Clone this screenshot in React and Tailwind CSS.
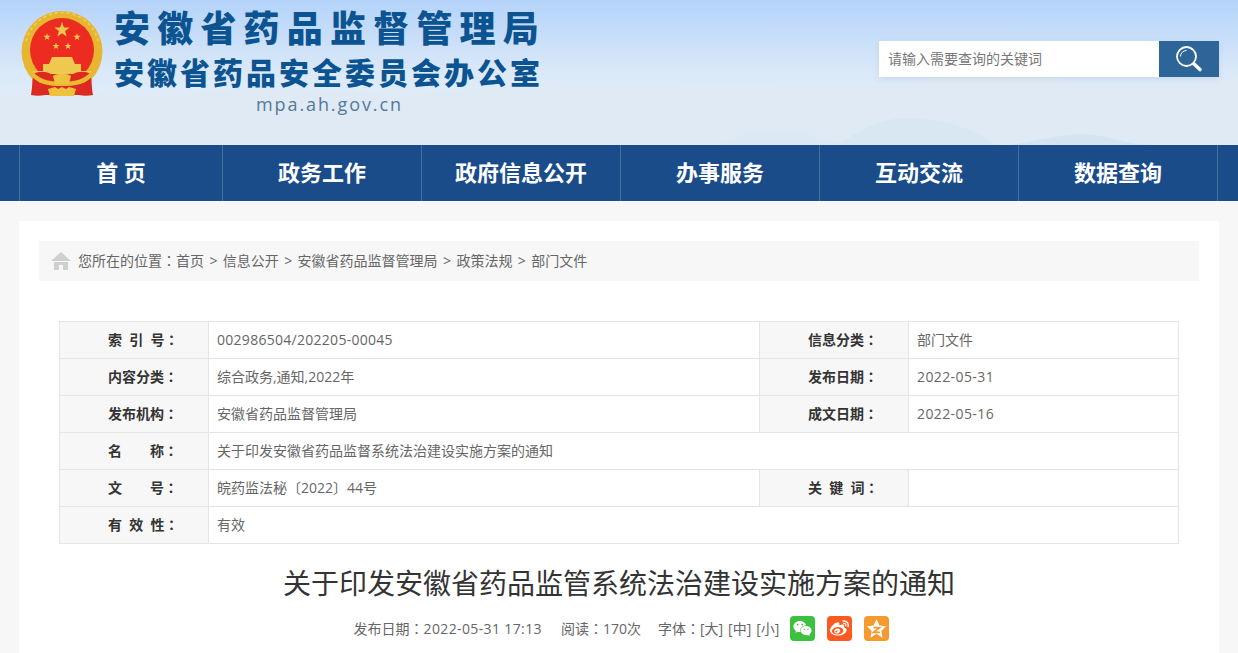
import { FaWeixin, FaWeibo } from "react-icons/fa";

const NAV = ["首 页", "政务工作", "政府信息公开", "办事服务", "互动交流", "数据查询"];
const CRUMBS = ["首页", "信息公开", "安徽省药品监督管理局", "政策法规", "部门文件"];

// centred full-width colon, the SC face puts it low and left
function Colon() {
  return <span className="font-['Noto_Sans_CJK_TC']">：</span>;
}

function Label({ children }) {
  return (
    <td className="border border-[#e5e5e5] bg-[#f7f7f7] pb-[2px] pl-[48px] font-bold text-[#333] whitespace-pre">
      {children}
      <Colon />
    </td>
  );
}

function Value({ children, span }) {
  return (
    <td colSpan={span} className="border border-[#e5e5e5] pb-[2px] pl-[8px] text-[#666]">
      {children}
    </td>
  );
}

function Emblem() {
  const star = "M0-10 2.4-3.1 9.5-3.1 3.8 1.2 5.9 8.1 0 4 -5.9 8.1 -3.8 1.2 -9.5-3.1 -2.4-3.1Z";
  return (
    <svg width="82" height="86" viewBox="0 0 82 86" className="shrink-0">
      <path d="M11 60 C12 70 11 78 10 84 C16 85 22 85 28 83 L34 76 L48 76 L54 83 C60 85 66 85 72 84 C71 78 70 70 71 60Z" fill="#d9271f" />
      <circle cx="41" cy="40.5" r="40.5" fill="#e7b630" />
      <path d="M5 30 A37 37 0 0 1 77 30" fill="none" stroke="#f1cf63" strokeWidth="1.5" strokeDasharray="3 3" />
      <circle cx="41" cy="39" r="32" fill="#ec2c20" />
      <g fill="#efc84f">
        <path transform="translate(41 19) scale(.8)" d={star} />
        <path transform="translate(26 26) scale(.38)" d={star} />
        <path transform="translate(56 26) scale(.38)" d={star} />
        <path transform="translate(35 35) scale(.36)" d={star} />
        <path transform="translate(47 35) scale(.36)" d={star} />
        <path d="M31 46h20l3 7H28z" />
        <path d="M22 53h38v7H22z" />
        <path d="M11 60h60v5H11z" />
      </g>
      <path d="M12 63 C18 60 24 60 30 63 L52 63 C58 60 64 60 70 63 L70 84 L54 84 L27 84 L12 84Z" fill="#dc2a20" />
      <path d="M9 57 C16 68 28 71 41 71 C54 71 66 68 73 57 L74 62 C66 74 54 75 41 75 C28 75 16 74 8 62Z" fill="#e9b92f" />
      <path d="M32 65c4-3 14-3 18 0l-2 8H34z" fill="#efc23d" />
      <path d="M27 78l7-2 3 2 4-2 4 2 3-2 7 2-2 7H29z" fill="#efc23d" />
    </svg>
  );
}

function SearchIcon() {
  return (
    <svg width="28" height="28" viewBox="0 0 28 28" fill="none">
      <circle cx="11.5" cy="11.5" r="9.5" stroke="#fff" strokeWidth="1.8" />
      <path d="M5.5 11.5a6 6 0 0 1 6-6" stroke="#fff" strokeWidth="1" />
      <path d="M19 19l6 5.5" stroke="#fff" strokeWidth="3.6" strokeLinecap="round" />
    </svg>
  );
}

function HomeIcon() {
  return (
    <svg width="20" height="18" viewBox="0 0 20 18" className="mr-[7px] shrink-0" fill="#cfcfcf">
      <path d="M10 0 20 9H0Z" />
      <path d="M3 10h14v8h-5v-5H8v5H3Z" />
    </svg>
  );
}

function QzoneIcon() {
  return (
    <svg width="21" height="21" viewBox="0 0 24 24">
      <path fill="#fff" d="M12 1.5l3.4 7 7.6 1-5.5 5.3 1.4 7.7L12 18l-6.9 4.5 1.4-7.7L1 9.5l7.6-1z" />
      <path fill="none" stroke="#f59a2e" strokeWidth="2" d="M8.5 11h7l-7 5.5h7.5" />
    </svg>
  );
}

export default function App() {
  return (
    <div className="h-screen overflow-hidden bg-[#f7f7f7] font-['Open_Sans','Noto_Sans_CJK_SC',sans-serif] text-[14px]">
      <header className="relative h-[145px] overflow-hidden bg-gradient-to-b from-[#b4d3fa] via-[#dbe9f8] to-[#e9f1f9]">
        {/* mountains behind the title */}
        <svg className="absolute inset-0" width="1238" height="145" viewBox="0 0 1238 145" preserveAspectRatio="none">
          <path fill="#dfeaf4" d="M0 95 C60 88 130 98 220 92 C300 84 380 100 470 90 C540 76 600 84 680 88 C760 92 800 84 880 86 C920 82 980 66 1040 76 C1100 88 1180 84 1238 78 L1238 145 L0 145Z" />
          <path fill="#d9e7f2" d="M840 145 C850 135 880 118 905 118 C940 118 975 128 995 145Z" />
          <path fill="#d5e4f1" d="M1010 145 C1040 140 1060 135 1085 134 C1110 136 1130 145 1150 145Z" />
          <path fill="#dce8f3" d="M720 145 C740 134 770 128 800 134 C820 138 830 142 850 145Z" />
        </svg>
        <div className="relative flex items-start pl-[21px] pr-[19px]">
          <div className="mt-[11px]">
            <Emblem />
          </div>
          <div className="ml-[11px] w-[426px] text-[#0c5391]">
            <div className="mt-[6px] h-[46px] whitespace-nowrap text-[36px] leading-[46px] font-black tracking-[7.2px]">安徽省药品监督管理局</div>
            <div className="h-[41px] whitespace-nowrap text-[30px] leading-[41px] font-black tracking-[3px]">安徽省药品安全委员会办公室</div>
            <div className="ml-[142px] mt-[-1px] whitespace-nowrap text-[18px] leading-[24px] tracking-[1.9px] text-[#54799b]">mpa.ah.gov.cn</div>
          </div>
          <div className="ml-auto mt-[41px] flex h-[36px] w-[340px] shadow-[0_2px_6px_rgba(120,150,190,0.2)]">
            <div className="flex flex-1 items-center bg-white pb-[1px] pl-[9px] text-[14px] text-[#777]">请输入需要查询的关键词</div>
            <button className="flex w-[60px] items-center justify-center bg-[#2e6599]">
              <SearchIcon />
            </button>
          </div>
        </div>
      </header>

      <nav className="h-[56px] bg-[#1a4c8a] pl-[19px]">
        <div className="grid h-full w-[1199px] grid-cols-[202px_repeat(5,199px)] border-x border-[#44709f]">
          {NAV.map((item, i) => (
            <div
              key={item}
              className={`flex items-center justify-center pb-[2px] text-[22px] font-bold whitespace-pre text-white ${i > 0 ? "border-l border-[#44709f]" : ""}`}
            >
              {item}
            </div>
          ))}
        </div>
      </nav>

      <main className="mx-[19px] mt-[20px] bg-white px-[20px] pt-[20px] pb-[40px]">
        <div className="flex h-[40px] items-center bg-[#f7f7f7] pb-[1px] pl-[12px] text-[#666]">
          <HomeIcon />
          您所在的位置<Colon />
          {CRUMBS.map((c, i) => (
            <span key={c} className="whitespace-pre">
              {i > 0 && <span className="mx-[5.4px]">&gt;</span>}
              {c}
            </span>
          ))}
        </div>

        <table className="mx-[20px] mt-[40px] w-[1119px] table-fixed border-collapse [&_tr]:h-[37px]">
          <colgroup>
            <col className="w-[149px]" />
            <col className="w-[551px]" />
            <col className="w-[149px]" />
            <col className="w-[270px]" />
          </colgroup>
          <tbody>
            <tr>
              <Label>{"索  引  号"}</Label>
              <Value><span className="tracking-[0.28px]">002986504/202205-00045</span></Value>
              <Label>信息分类</Label>
              <Value>部门文件</Value>
            </tr>
            <tr>
              <Label>内容分类</Label>
              <Value>综合政务,通知,2022年</Value>
              <Label>发布日期</Label>
              <Value><span className="tracking-[0.4px]">2022-05-31</span></Value>
            </tr>
            <tr>
              <Label>发布机构</Label>
              <Value>安徽省药品监督管理局</Value>
              <Label>成文日期</Label>
              <Value><span className="tracking-[0.4px]">2022-05-16</span></Value>
            </tr>
            <tr>
              <Label>{"名　　称"}</Label>
              <Value span={3}>关于印发安徽省药品监督系统法治建设实施方案的通知</Value>
            </tr>
            <tr>
              <Label>{"文　　号"}</Label>
              <Value>皖药监法秘〔2022〕44号</Value>
              <Label>{"关  键  词"}</Label>
              <Value />
            </tr>
            <tr>
              <Label>{"有  效  性"}</Label>
              <Value span={3}>有效</Value>
            </tr>
          </tbody>
        </table>

        <h1 className="mt-[20px] text-center text-[28px] leading-[38px] text-[#333]">关于印发安徽省药品监管系统法治建设实施方案的通知</h1>

        <div className="mt-[14px] flex h-[25px] items-center justify-center pl-[5px] whitespace-pre text-[#666]">
          <span>发布日期<Colon /><span className="tracking-[0.37px]">2022-05-31 17:13</span></span>
          <span className="ml-[19px]">阅读<Colon />170次</span>
          <span className="ml-[17px]">字体<Colon />[大]</span>
          <span className="ml-[5px]">[中]</span>
          <span className="ml-[5px]">[小]</span>
          <span className="ml-[11px] flex h-[25px] w-[25px] items-center justify-center rounded-[4px] bg-[#3cc13f] text-white">
            <FaWeixin className="h-[19px] w-[19px]" />
          </span>
          <span className="ml-[12px] flex h-[25px] w-[25px] items-center justify-center rounded-[4px] bg-[#fc5a1f] text-white">
            <FaWeibo className="h-[19px] w-[19px]" />
          </span>
          <span className="ml-[12px] flex h-[25px] w-[25px] items-center justify-center rounded-[4px] bg-[#f59a2e]">
            <QzoneIcon />
          </span>
        </div>
      </main>
    </div>
  );
}
